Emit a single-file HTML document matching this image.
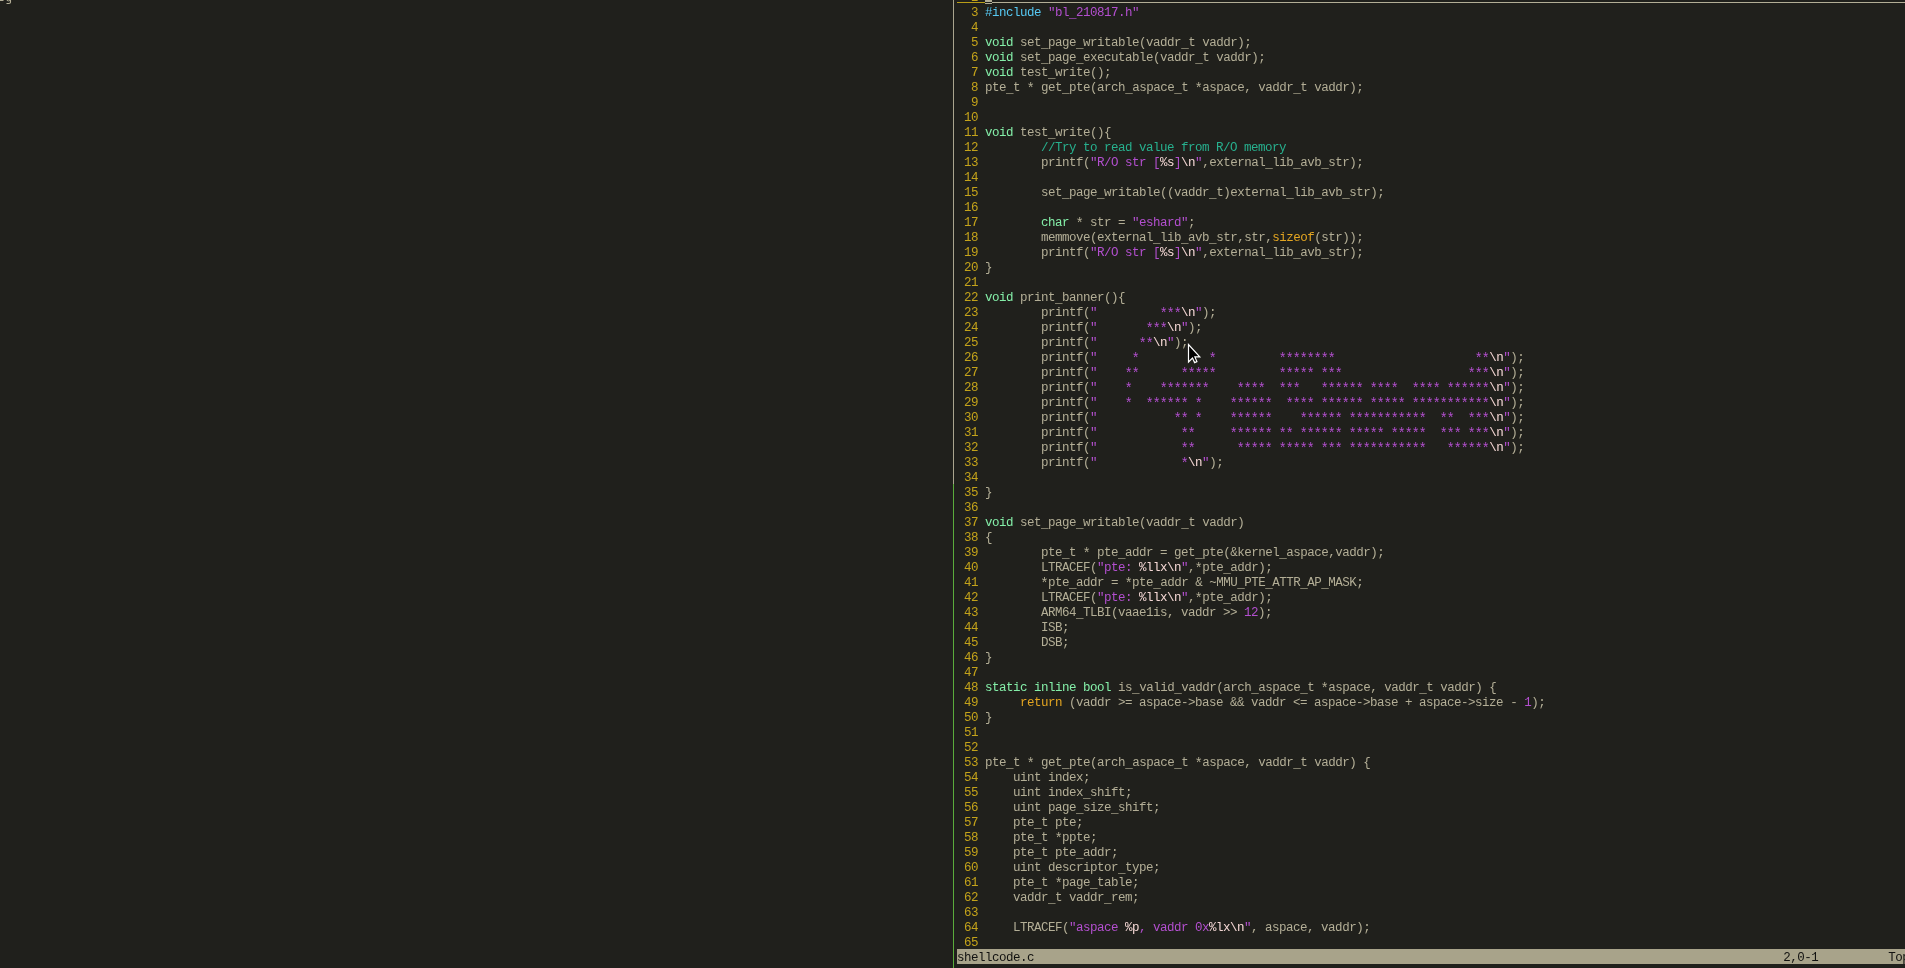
<!DOCTYPE html>
<html><head><meta charset="utf-8"><style>
html,body{margin:0;padding:0;width:1905px;height:968px;overflow:hidden;background:#20201c;}
#scr{position:absolute;left:0;top:0;width:1905px;height:968px;overflow:hidden;background:#20201c;}
.txt{font-family:"Liberation Mono",monospace;font-size:12.5px;letter-spacing:-0.5px;white-space:pre;}
.r{position:absolute;left:957px;height:15px;line-height:15px;color:#b3ae96;}
.r>span,.r{}
.ln{color:#c4a31a;}
.type{color:#84eea8;}
.pre{color:#56c8f2;}
.str{color:#b34fcf;}
.spc{color:#f6d9d6;}
.cmt{color:#27b08e;}
.stmt{color:#e3a521;}
.num{color:#b34fcf;}
u{text-decoration:none;position:relative;top:1px;}
b{line-height:0;font-weight:normal;font-size:14px;letter-spacing:-1.4px;position:relative;top:2px;left:-0.7px;}
#text{position:absolute;left:0;top:2px;width:1905px;height:968px;will-change:transform;}
.ul{position:absolute;height:1px;top:2px;}
#status{position:absolute;left:957px;top:949px;width:948px;height:15px;background:#a8a38a;}
#stext{position:absolute;left:957px;top:949px;height:15px;line-height:15px;color:#121210;}
#div1{position:absolute;left:953px;top:0;width:1px;height:484px;background:#a9a48e;}
#div2{position:absolute;left:953px;top:484px;width:1px;height:484px;background:#5aab3b;}
</style></head><body>
<div id="scr">
<div id="div1"></div><div id="div2"></div>
<div class="ul" style="left:957px;width:28px;background:#b89d17"></div>
<div class="ul" style="left:992px;width:913px;background:#b3ae96"></div>
<div style="position:absolute;left:985px;top:0;width:7px;height:2px;background:#b1ac95"></div>
<div style="position:absolute;left:985px;top:3px;width:7px;height:1px;background:#b1ac95"></div>
<div style="position:absolute;left:0;top:0;width:3px;height:1px;background:#b3ae96"></div><div style="position:absolute;left:3px;top:0;width:1px;height:1px;background:#6a6858"></div>
<svg style="position:absolute;left:0;top:0;display:block" width="16" height="6" viewBox="0 0 16 6"><path d="M6.8 0.4 Q8.5 1.4 10.4 0.4" fill="none" stroke="#b3ae96" stroke-width="1"/><path d="M10.5 0 V2.3 Q10.5 3.5 8.8 3.5 H6.5" fill="none" stroke="#b3ae96" stroke-width="1.1"/></svg>
<div id="status"></div>
<div id="text" class="txt">
<div class="r" style="top:-11px"><span class="ln">  2 </span></div>
<div class="r" style="top:4px"><span class="ln">  3 </span><span class="pre">#include</span> <span class="str">&quot;bl<u>_</u>210817.h&quot;</span></div>
<div class="r" style="top:19px"><span class="ln">  4 </span></div>
<div class="r" style="top:34px"><span class="ln">  5 </span><span class="type">void</span> set<u>_</u>page<u>_</u>writable(vaddr<u>_</u>t vaddr);</div>
<div class="r" style="top:49px"><span class="ln">  6 </span><span class="type">void</span> set<u>_</u>page<u>_</u>executable(vaddr<u>_</u>t vaddr);</div>
<div class="r" style="top:64px"><span class="ln">  7 </span><span class="type">void</span> test<u>_</u>write();</div>
<div class="r" style="top:79px"><span class="ln">  8 </span>pte<u>_</u>t <b>*</b> get<u>_</u>pte(arch<u>_</u>aspace<u>_</u>t <b>*</b>aspace, vaddr<u>_</u>t vaddr);</div>
<div class="r" style="top:94px"><span class="ln">  9 </span></div>
<div class="r" style="top:109px"><span class="ln"> 10 </span></div>
<div class="r" style="top:124px"><span class="ln"> 11 </span><span class="type">void</span> test<u>_</u>write(){</div>
<div class="r" style="top:139px"><span class="ln"> 12 </span>        <span class="cmt">//Try to read value from R/O memory</span></div>
<div class="r" style="top:154px"><span class="ln"> 13 </span>        printf(<span class="str">&quot;R/O str [</span><span class="spc">%s</span><span class="str">]</span><span class="spc">\n</span><span class="str">&quot;</span>,external<u>_</u>lib<u>_</u>avb<u>_</u>str);</div>
<div class="r" style="top:169px"><span class="ln"> 14 </span></div>
<div class="r" style="top:184px"><span class="ln"> 15 </span>        set<u>_</u>page<u>_</u>writable((vaddr<u>_</u>t)external<u>_</u>lib<u>_</u>avb<u>_</u>str);</div>
<div class="r" style="top:199px"><span class="ln"> 16 </span></div>
<div class="r" style="top:214px"><span class="ln"> 17 </span>        <span class="type">char</span> <b>*</b> str = <span class="str">&quot;eshard&quot;</span>;</div>
<div class="r" style="top:229px"><span class="ln"> 18 </span>        memmove(external<u>_</u>lib<u>_</u>avb<u>_</u>str,str,<span class="stmt">sizeof</span>(str));</div>
<div class="r" style="top:244px"><span class="ln"> 19 </span>        printf(<span class="str">&quot;R/O str [</span><span class="spc">%s</span><span class="str">]</span><span class="spc">\n</span><span class="str">&quot;</span>,external<u>_</u>lib<u>_</u>avb<u>_</u>str);</div>
<div class="r" style="top:259px"><span class="ln"> 20 </span>}</div>
<div class="r" style="top:274px"><span class="ln"> 21 </span></div>
<div class="r" style="top:289px"><span class="ln"> 22 </span><span class="type">void</span> print<u>_</u>banner(){</div>
<div class="r" style="top:304px"><span class="ln"> 23 </span>        printf(<span class="str">&quot;         <b>***</b></span><span class="spc">\n</span><span class="str">&quot;</span>);</div>
<div class="r" style="top:319px"><span class="ln"> 24 </span>        printf(<span class="str">&quot;       <b>***</b></span><span class="spc">\n</span><span class="str">&quot;</span>);</div>
<div class="r" style="top:334px"><span class="ln"> 25 </span>        printf(<span class="str">&quot;      <b>**</b></span><span class="spc">\n</span><span class="str">&quot;</span>);</div>
<div class="r" style="top:349px"><span class="ln"> 26 </span>        printf(<span class="str">&quot;     <b>*</b>          <b>*</b>         <b>********</b>                    <b>**</b></span><span class="spc">\n</span><span class="str">&quot;</span>);</div>
<div class="r" style="top:364px"><span class="ln"> 27 </span>        printf(<span class="str">&quot;    <b>**</b>      <b>*****</b>         <b>*****</b> <b>***</b>                  <b>***</b></span><span class="spc">\n</span><span class="str">&quot;</span>);</div>
<div class="r" style="top:379px"><span class="ln"> 28 </span>        printf(<span class="str">&quot;    <b>*</b>    <b>*******</b>    <b>****</b>  <b>***</b>   <b>******</b> <b>****</b>  <b>****</b> <b>******</b></span><span class="spc">\n</span><span class="str">&quot;</span>);</div>
<div class="r" style="top:394px"><span class="ln"> 29 </span>        printf(<span class="str">&quot;    <b>*</b>  <b>******</b> <b>*</b>    <b>******</b>  <b>****</b> <b>******</b> <b>*****</b> <b>***********</b></span><span class="spc">\n</span><span class="str">&quot;</span>);</div>
<div class="r" style="top:409px"><span class="ln"> 30 </span>        printf(<span class="str">&quot;           <b>**</b> <b>*</b>    <b>******</b>    <b>******</b> <b>***********</b>  <b>**</b>  <b>***</b></span><span class="spc">\n</span><span class="str">&quot;</span>);</div>
<div class="r" style="top:424px"><span class="ln"> 31 </span>        printf(<span class="str">&quot;            <b>**</b>     <b>******</b> <b>**</b> <b>******</b> <b>*****</b> <b>*****</b>  <b>***</b> <b>***</b></span><span class="spc">\n</span><span class="str">&quot;</span>);</div>
<div class="r" style="top:439px"><span class="ln"> 32 </span>        printf(<span class="str">&quot;            <b>**</b>      <b>*****</b> <b>*****</b> <b>***</b> <b>***********</b>   <b>******</b></span><span class="spc">\n</span><span class="str">&quot;</span>);</div>
<div class="r" style="top:454px"><span class="ln"> 33 </span>        printf(<span class="str">&quot;            <b>*</b></span><span class="spc">\n</span><span class="str">&quot;</span>);</div>
<div class="r" style="top:469px"><span class="ln"> 34 </span></div>
<div class="r" style="top:484px"><span class="ln"> 35 </span>}</div>
<div class="r" style="top:499px"><span class="ln"> 36 </span></div>
<div class="r" style="top:514px"><span class="ln"> 37 </span><span class="type">void</span> set<u>_</u>page<u>_</u>writable(vaddr<u>_</u>t vaddr)</div>
<div class="r" style="top:529px"><span class="ln"> 38 </span>{</div>
<div class="r" style="top:544px"><span class="ln"> 39 </span>        pte<u>_</u>t <b>*</b> pte<u>_</u>addr = get<u>_</u>pte(&amp;kernel<u>_</u>aspace,vaddr);</div>
<div class="r" style="top:559px"><span class="ln"> 40 </span>        LTRACEF(<span class="str">&quot;pte: </span><span class="spc">%llx\n</span><span class="str">&quot;</span>,<b>*</b>pte<u>_</u>addr);</div>
<div class="r" style="top:574px"><span class="ln"> 41 </span>        <b>*</b>pte<u>_</u>addr = <b>*</b>pte<u>_</u>addr &amp; ~MMU<u>_</u>PTE<u>_</u>ATTR<u>_</u>AP<u>_</u>MASK;</div>
<div class="r" style="top:589px"><span class="ln"> 42 </span>        LTRACEF(<span class="str">&quot;pte: </span><span class="spc">%llx\n</span><span class="str">&quot;</span>,<b>*</b>pte<u>_</u>addr);</div>
<div class="r" style="top:604px"><span class="ln"> 43 </span>        ARM64<u>_</u>TLBI(vaae1is, vaddr &gt;&gt; <span class="num">12</span>);</div>
<div class="r" style="top:619px"><span class="ln"> 44 </span>        ISB;</div>
<div class="r" style="top:634px"><span class="ln"> 45 </span>        DSB;</div>
<div class="r" style="top:649px"><span class="ln"> 46 </span>}</div>
<div class="r" style="top:664px"><span class="ln"> 47 </span></div>
<div class="r" style="top:679px"><span class="ln"> 48 </span><span class="type">static</span> <span class="type">inline</span> <span class="type">bool</span> is<u>_</u>valid<u>_</u>vaddr(arch<u>_</u>aspace<u>_</u>t <b>*</b>aspace, vaddr<u>_</u>t vaddr) {</div>
<div class="r" style="top:694px"><span class="ln"> 49 </span>     <span class="stmt">return</span> (vaddr &gt;= aspace-&gt;base &amp;&amp; vaddr &lt;= aspace-&gt;base + aspace-&gt;size - <span class="num">1</span>);</div>
<div class="r" style="top:709px"><span class="ln"> 50 </span>}</div>
<div class="r" style="top:724px"><span class="ln"> 51 </span></div>
<div class="r" style="top:739px"><span class="ln"> 52 </span></div>
<div class="r" style="top:754px"><span class="ln"> 53 </span>pte<u>_</u>t <b>*</b> get<u>_</u>pte(arch<u>_</u>aspace<u>_</u>t <b>*</b>aspace, vaddr<u>_</u>t vaddr) {</div>
<div class="r" style="top:769px"><span class="ln"> 54 </span>    uint index;</div>
<div class="r" style="top:784px"><span class="ln"> 55 </span>    uint index<u>_</u>shift;</div>
<div class="r" style="top:799px"><span class="ln"> 56 </span>    uint page<u>_</u>size<u>_</u>shift;</div>
<div class="r" style="top:814px"><span class="ln"> 57 </span>    pte<u>_</u>t pte;</div>
<div class="r" style="top:829px"><span class="ln"> 58 </span>    pte<u>_</u>t <b>*</b>ppte;</div>
<div class="r" style="top:844px"><span class="ln"> 59 </span>    pte<u>_</u>t pte<u>_</u>addr;</div>
<div class="r" style="top:859px"><span class="ln"> 60 </span>    uint descriptor<u>_</u>type;</div>
<div class="r" style="top:874px"><span class="ln"> 61 </span>    pte<u>_</u>t <b>*</b>page<u>_</u>table;</div>
<div class="r" style="top:889px"><span class="ln"> 62 </span>    vaddr<u>_</u>t vaddr<u>_</u>rem;</div>
<div class="r" style="top:904px"><span class="ln"> 63 </span></div>
<div class="r" style="top:919px"><span class="ln"> 64 </span>    LTRACEF(<span class="str">&quot;aspace </span><span class="spc">%p</span><span class="str">, vaddr 0x</span><span class="spc">%lx\n</span><span class="str">&quot;</span>, aspace, vaddr);</div>
<div class="r" style="top:934px"><span class="ln"> 65 </span></div>
<div id="stext">shellcode.c                                                                                                           2,0-1          Top</div>
</div>
<svg style="position:absolute;left:1187px;top:343px" width="16" height="24" viewBox="0 0 16 24"><path d="M1.5 1.5 L1.5 19 L5.5 15.1 L7.6 19.6 L9.9 18.6 L7.9 13.9 L12.8 13.9 Z" fill="#000" stroke="#fff" stroke-width="1.2" stroke-linejoin="miter"/></svg>
</div>
</body></html>
